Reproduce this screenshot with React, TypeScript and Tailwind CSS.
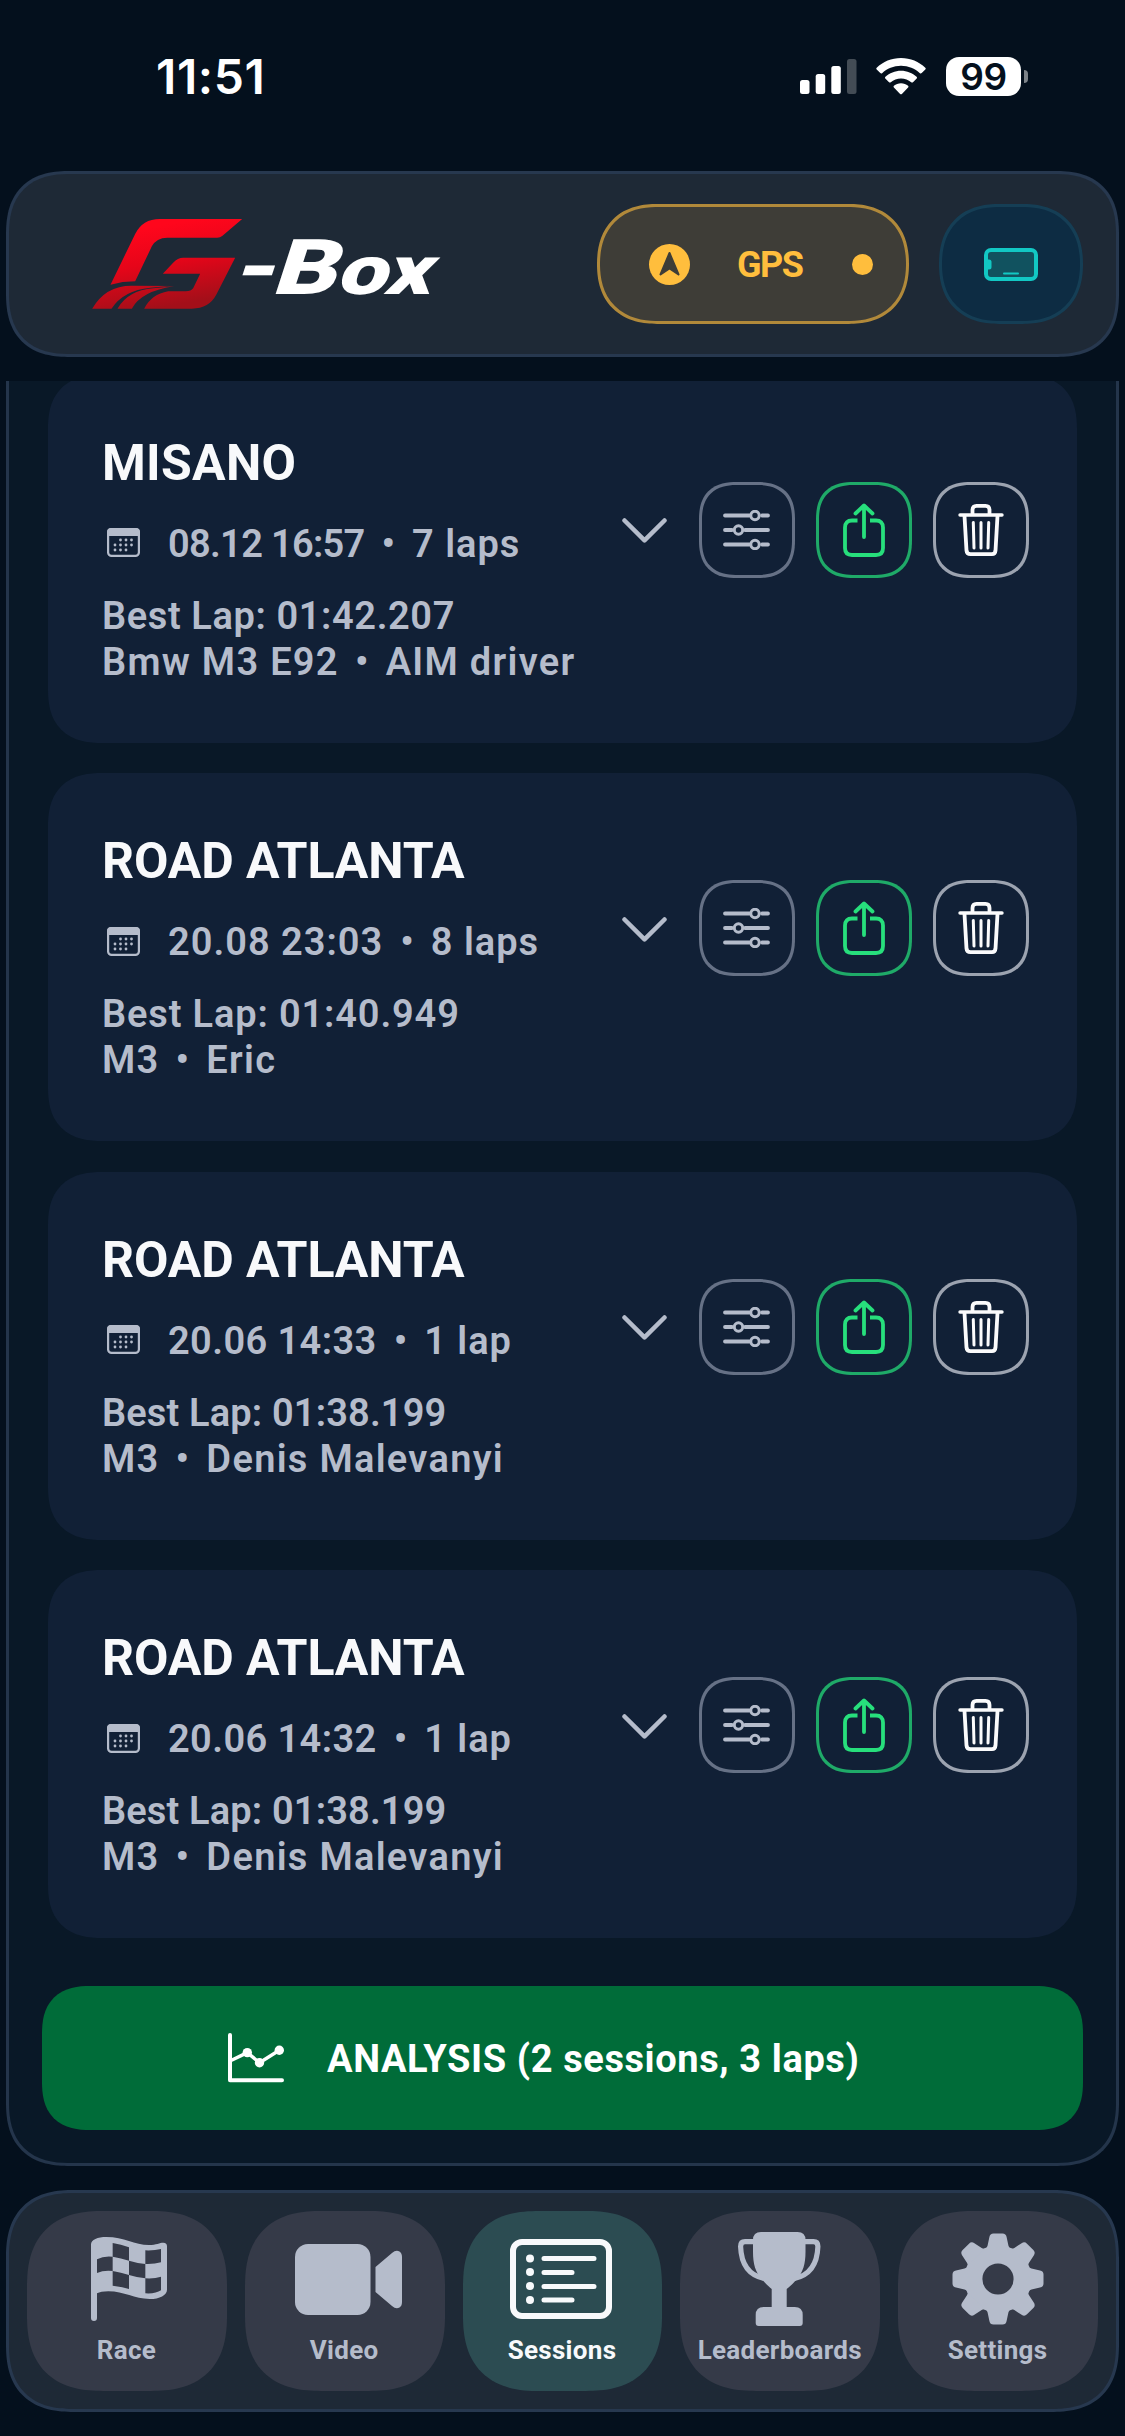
import { FC, ReactNode } from "react";
import clsx from "clsx";

interface Session {
  id: number;
  track: string;
  date: string;
  laps: string;
  bestLap: string;
  car: string;
  driver: string;
  dateClass: string;
  bestLapClass: string;
}

interface NavItem {
  label: string;
  icon: ReactNode;
  active?: boolean;
}

const sessions: Session[] = [
  { id: 1, track: "MISANO", date: "08.12 16:57", laps: "7 laps", bestLap: "01:42.207", car: "Bmw M3 E92", driver: "AIM driver", dateClass: "tracking-[-0.7px]", bestLapClass: "tracking-[0.6px]" },
  { id: 2, track: "ROAD ATLANTA", date: "20.08 23:03", laps: "8 laps", bestLap: "01:40.949", car: "M3", driver: "Eric", dateClass: "tracking-[1px]", bestLapClass: "tracking-[0.85px]" },
  { id: 3, track: "ROAD ATLANTA", date: "20.06 14:33", laps: "1 lap", bestLap: "01:38.199", car: "M3", driver: "Denis Malevanyi", dateClass: "tracking-[0.4px]", bestLapClass: "tracking-[0.15px]" },
  { id: 4, track: "ROAD ATLANTA", date: "20.06 14:32", laps: "1 lap", bestLap: "01:38.199", car: "M3", driver: "Denis Malevanyi", dateClass: "tracking-[0.4px]", bestLapClass: "tracking-[0.15px]" },
];

const FlagIcon = () => (
  <svg className="ml-[4px]" width="76" height="84" viewBox="0 0 228 252" fill="currentColor">
    <path
      fillRule="evenodd"
      d="M0 22C0 8 20 0 46 0C100 0 130 24 174 24C196 24 206 17 217 17Q228 17 228 28V158C228 174 206 186 176 186C130 186 100 163 52 163C36 163 26 165 18 169V243Q18 252 9 252Q0 252 0 243Z
      M65 18V59Q90 63 114 71V31Q90 22 65 18Z
      M163 40V81Q190 82 210 76V36Q190 41 163 40Z
      M18 67V108Q38 99 65 102V59Q38 56 18 67Z
      M114 71V114Q140 122 163 124V81Q140 79 114 71Z
      M65 102V146Q90 149 114 156V114Q90 106 65 102Z
      M163 124V169Q194 171 210 160V119Q190 126 163 124Z"
    />
  </svg>
);

const VideoIcon = () => (
  <svg className="ml-[7px]" width="107" height="71" viewBox="0 0 107 71" fill="currentColor">
    <rect width="75.5" height="71" rx="13" />
    <path d="M80.500 23L97 9Q101 5.500 104.500 7.500Q107 9 107 13V58Q107 62 104.500 63.500Q101 65.500 97 62L80.500 48Z" />
  </svg>
);

const SessionsIcon = () => (
  <svg className="-ml-[2px]" width="102" height="80" viewBox="0 0 102 80" fill="none" stroke="currentColor" strokeWidth="5" strokeLinecap="round">
    <rect x="3" y="3" width="96" height="74" rx="9" strokeWidth="6" />
    <path d="M34 19.500H84M34 33.500H62M34 47.500H84M34 61H62" />
    <g fill="currentColor" stroke="none">
      <circle cx="20" cy="19.500" r="4" />
      <circle cx="20" cy="33" r="4" />
      <circle cx="20" cy="47" r="4" />
      <circle cx="20" cy="61" r="4" />
    </g>
  </svg>
);

const TrophyIcon = () => (
  <svg className="-ml-[2px]" width="83" height="94" viewBox="0 0 83 94" fill="currentColor">
    <path d="M15 8Q15 0 23 0H59.500Q67.500 0 67.500 8V20C67.500 32 65 40 59 47Q54 53 48.700 57V75H33.700V57Q28.500 53 23.500 47C17.500 40 15 32 15 20Z" />
    <path d="M17 9.700H7Q2.600 9.700 2.600 14.500C3.200 32 10 43 26 46.500M65.500 9.700H75.500Q79.900 9.700 79.900 14.500C79.300 32 72.500 43 56.500 46.500" fill="none" stroke="currentColor" strokeWidth="5.200" />
    <path d="M17.700 83Q17.700 75 25.700 75H56.700Q64.700 75 64.700 83V91Q64.700 94 61.700 94H20.700Q17.700 94 17.700 91Z" />
  </svg>
);

const GearIcon = () => (
  <svg width="92" height="92" viewBox="-46 -46 92 92">
    <defs>
      <mask id="gear-hole">
        <rect x="-46" y="-46" width="92" height="92" fill="white" />
        <circle r="15.600" fill="black" />
      </mask>
    </defs>
    <g fill="currentColor" mask="url(#gear-hole)">
      <circle r="33.600" />
      {[0, 45, 90, 135, 180, 225, 270, 315].map((angle) => (
        <path
          key={angle}
          transform={`rotate(${angle})`}
          d="M-12.500 -30.500Q-10.800 -31.500 -10.400 -33.500L-8.600 -42Q-8 -45.500 -4.500 -45.500H4.500Q8 -45.500 8.600 -42L10.400 -33.500Q10.800 -31.500 12.500 -30.500Z"
        />
      ))}
    </g>
  </svg>
);

const navItems: NavItem[] = [
  { label: "Race", icon: <FlagIcon /> },
  { label: "Video", icon: <VideoIcon /> },
  { label: "Sessions", icon: <SessionsIcon />, active: true },
  { label: "Leaderboards", icon: <TrophyIcon /> },
  { label: "Settings", icon: <GearIcon /> },
];

const StatusBar = () => (
  <div className="h-[171px] shrink-0 flex items-start justify-between pl-[156px] pr-[97px] pt-[56px] text-white">
    <span className="font-[Inter] text-[48px] leading-[42px] font-semibold tracking-[0.6px]">11:51</span>
    <div className="flex items-center h-[40px]">
      <svg width="57" height="36" viewBox="0 0 57 36" fill="currentColor">
        <rect x="0" y="22" width="9.500" height="14" rx="2.500" />
        <rect x="15.700" y="16" width="9.500" height="20" rx="2.500" />
        <rect x="31.300" y="8" width="9.500" height="28" rx="2.500" />
        <rect x="47" y="1" width="9.500" height="35" rx="2.500" opacity="0.250" />
      </svg>
      <svg className="ml-[19px]" width="50" height="37" viewBox="0 0 50 37" fill="currentColor">
        <path d="M25 0C34.500 0 43 3.700 49.300 9.700Q50.200 10.600 49.300 11.500L45.700 15.100Q44.800 16 43.900 15.200C39 10.500 32.400 7.700 25 7.700S11 10.500 6.100 15.200Q5.200 16 4.300 15.100L0.700 11.500Q-0.200 10.600 0.700 9.700C7 3.700 15.500 0 25 0Z" />
        <path d="M25 12.700C31 12.700 36.500 15 40.600 18.800Q41.600 19.700 40.700 20.600L37 24.200Q36.100 25 35.200 24.200C32.500 21.900 28.900 20.400 25 20.400S17.500 21.900 14.800 24.200Q13.900 25 13 24.200L9.300 20.600Q8.400 19.700 9.400 18.800C13.500 15 19 12.700 25 12.700Z" />
        <path d="M25 25.200C27.700 25.200 30.200 26.200 32.100 27.800Q33 28.700 32.100 29.600L25.900 35.900Q25 36.700 24.100 35.900L17.900 29.600Q17 28.700 17.900 27.800C19.800 26.200 22.300 25.200 25 25.200Z" />
      </svg>
      <div className="ml-[20px] w-[75px] h-[39px] rounded-[13px] bg-white flex items-center justify-center font-[Inter] text-[37px] leading-none font-semibold tracking-[-0.5px] text-[#04101d]">
        99
      </div>
      <div className="ml-[3px] w-[4px] h-[13px] rounded-r-full bg-[#7d8389]" />
    </div>
  </div>
);

const Logo = () => (
  <div className="flex items-start pt-[45px]">
    <svg width="151" height="90" viewBox="97 88 452 270">
      <defs>
        <linearGradient id="logo-red" gradientUnits="userSpaceOnUse" x1="280" y1="110" x2="320" y2="350">
          <stop offset="0" stopColor="#ff061c" />
          <stop offset="0.450" stopColor="#e60519" />
          <stop offset="1" stopColor="#a30f19" />
        </linearGradient>
      </defs>
      <g fill="url(#logo-red)">
        <path d="M152 285L226 133Q248 88 300 88H547L488 138Q481 144 472 144H322Q290 144 276 170L226 275Q188 275 152 285Z" />
        <path d="M309 252L340 219Q354 204 370 204H526L470 314Q448 357 396 357H253Q275 314 325 305H378Q394 305 400 296L421 252Z" />
        <path d="M97 357Q137 288 215 288L343 289Q300 291 272 294Q190 302 155 357Z" />
        <path d="M173 357Q205 302 280 296L343 290Q245 304 216 357Z" />
      </g>
    </svg>
    <div className="mt-[4px] -ml-[6px] origin-left scale-x-[1.3] -skew-x-[14deg] font-[Roboto] font-black text-[77px] leading-[90px] text-white whitespace-nowrap">
      <span className="tracking-[-3px]">-</span>B<span className="text-[69px] tracking-[-1px]">ox</span>
    </div>
  </div>
);

const Header = () => (
  <header className="mx-[6px] h-[186px] shrink-0 flex justify-between rounded-[64px] [corner-shape:superellipse(1.3)] border-[3px] border-[#27384f] bg-[#1e2936] pl-[83px] pr-[33px]">
    <Logo />
    <div className="flex items-center gap-[30px]">
      <div className="w-[312px] h-[120px] rounded-[68px] [corner-shape:superellipse(1.2)] border-[3px] border-[#b1893a] bg-[#3e3d37] flex items-center pl-[49px] pr-[33px] text-[#ffbe3d]">
        <svg width="41" height="41" viewBox="0 0 41 41">
          <circle cx="20.500" cy="20.500" r="20.500" fill="currentColor" />
          <path d="M20.500 9L29.500 30.500L20.500 24.500L11.500 30.500Z" fill="#3e3d37" stroke="#3e3d37" strokeWidth="2" strokeLinejoin="round" />
        </svg>
        <span className="ml-[47px] mt-[2px] font-[Roboto] text-[36px] font-bold tracking-[-1.5px]">GPS</span>
        <span className="ml-auto size-[21px] rounded-full bg-[#ffbe3d]" />
      </div>
      <div className="w-[144px] h-[120px] rounded-[60px] [corner-shape:superellipse(1.2)] border-[3px] border-[#153e55] bg-[#0d2c43] flex items-center justify-center">
        <svg width="54" height="33" viewBox="0 0 54 33">
          <rect x="2" y="2" width="50" height="29" rx="5" fill="#11525f" stroke="#12c8c4" strokeWidth="4" />
          <path d="M2 11.500H5Q7.500 11.500 7.500 14V19Q7.500 21.500 5 21.500H2Z" fill="#12c8c4" />
          <path d="M20 25.500H34" stroke="#12c8c4" strokeWidth="2" strokeLinecap="round" />
        </svg>
      </div>
    </div>
  </header>
);

const CalendarIcon = () => (
  <svg width="33" height="29" viewBox="0 0 33 29" fill="currentColor">
    <rect x="1.100" y="1.100" width="30.800" height="26.800" rx="3.500" fill="none" stroke="currentColor" strokeWidth="2.200" />
    <path d="M0 8V4Q0 0 4 0H29Q33 0 33 4V8Z" />
    {[13.500, 19, 24.500].map((x) => <circle key={x} cx={x} cy="12" r="1.400" />)}
    {[8, 13.500, 19, 24.500].map((x) => <circle key={x} cx={x} cy="17" r="1.400" />)}
    {[8, 13.500, 19].map((x) => <circle key={x} cx={x} cy="22" r="1.400" />)}
  </svg>
);

const SlidersIcon = () => (
  <svg className="-ml-px" width="47" height="40" viewBox="0 0 47 40" fill="none" stroke="currentColor" strokeWidth="3.800" strokeLinecap="round">
    <path d="M2 5.500H26M39 5.500H45M2 20H9M22 20H45M2 34.500H26M39 34.500H45" />
    <g strokeWidth="3">
      <circle cx="32" cy="5.500" r="4.200" />
      <circle cx="15.500" cy="20" r="4.200" />
      <circle cx="32" cy="34.500" r="4.200" />
    </g>
  </svg>
);

const ShareIcon = () => (
  <svg className="-ml-px" width="42" height="54" viewBox="0 0 42 54" fill="none" stroke="currentColor" strokeWidth="3.800">
    <path d="M14.500 17.500H9Q2 17.500 2 24.500V45Q2 52 9 52H33Q40 52 40 45V24.500Q40 17.500 33 17.500H27" />
    <path d="M21 34V3M12.500 10.500L21 2.500L29.500 10.500" strokeLinecap="round" strokeLinejoin="round" />
  </svg>
);

const TrashIcon = () => (
  <svg className="-ml-px" width="46" height="54" viewBox="0 0 46 54" fill="none" stroke="currentColor" strokeWidth="3.800" strokeLinecap="round">
    <path d="M2 12H44" strokeWidth="3.400" />
    <path d="M14.500 11V7Q14.500 2.800 18.500 2.800H27.500Q31.500 2.800 31.500 7V11" />
    <path d="M6.500 13L8.500 47.500Q8.800 51.200 12.500 51.200H34Q37.200 51.200 37.500 47.500L39.500 13" />
    <path d="M15.300 19.500L16 45M23 19.500V45M30.700 19.500L30 45" strokeWidth="3" />
  </svg>
);

const ActionButton: FC<{ className: string; children: ReactNode }> = ({ className, children }) => (
  <button
    type="button"
    className={clsx(
      "size-[96px] rounded-[38px] [corner-shape:superellipse(1.3)] border-[3px] flex items-center justify-center",
      className
    )}
  >
    {children}
  </button>
);

const SessionCard: FC<{ session: Session }> = ({ session }) => (
  <div className="h-[368px] shrink-0 rounded-[54px] [corner-shape:superellipse(1.3)] bg-[#112036] flex justify-between items-start pl-[54px] pr-[48px] pt-[58px]">
    <div className="font-[Roboto] text-[38px] leading-[46px] font-semibold text-[#b5bccb] whitespace-nowrap">
      <h2
        className={clsx(
          "text-[50px] leading-[60px] font-bold text-[#f8f9fb]",
          session.track.length > 8 ? "tracking-[-0.1px]" : "tracking-[0.3px]"
        )}
      >
        {session.track}
      </h2>
      <div className="mt-[28px] flex items-center">
        <span className="-mt-[2px] ml-[5px] w-[61px]">
          <CalendarIcon />
        </span>
        <span className={session.dateClass}>{session.date}</span>
        <span className="mx-[17px]">•</span>
        <span className="tracking-[1px]">{session.laps}</span>
      </div>
      <p className={clsx("mt-[26px]", session.bestLapClass)}>Best Lap: {session.bestLap}</p>
      <p className="tracking-[1.3px]">
        {session.car}
        <span className="mx-[16px]">•</span>
        {session.driver}
      </p>
    </div>
    <div className="mt-[49px] flex items-center gap-[21px]">
      <svg className="mt-[2px] mr-[11px] text-[#b5bccb]" width="45" height="25" viewBox="0 0 45 25" fill="none" stroke="currentColor" strokeWidth="4.500" strokeLinecap="round" strokeLinejoin="round">
        <path d="M2.500 2.500L22.500 22.300L42.500 2.500" />
      </svg>
      <ActionButton className="border-[#667186] text-[#b5bccb]">
        <SlidersIcon />
      </ActionButton>
      <ActionButton className="border-[#1faa68] text-[#27df7c]">
        <ShareIcon />
      </ActionButton>
      <ActionButton className="border-[#9ca3b0] text-[#fbfbfc]">
        <TrashIcon />
      </ActionButton>
    </div>
  </div>
);

const AnalysisButton = () => (
  <button
    type="button"
    className="mt-[48px] mx-[33px] h-[144px] shrink-0 rounded-[48px] [corner-shape:superellipse(1.3)] bg-[#006c39] flex items-center pl-[186px] text-white"
  >
    <svg width="56" height="50" viewBox="0 0 56 50" fill="none" stroke="currentColor" strokeWidth="4" strokeLinecap="round" strokeLinejoin="round">
      <path d="M2 2V47.300H54" />
      <path d="M3 27.500L19.300 19.600L31.500 29.700L51.300 17.300" strokeWidth="3.400" />
      <g fill="currentColor" stroke="none">
        <circle cx="19.300" cy="19.600" r="4.700" />
        <circle cx="31.500" cy="29.700" r="4.700" />
        <circle cx="51.300" cy="17.300" r="4.700" />
      </g>
    </svg>
    <span className="ml-[43px] mt-[3px] font-[Roboto] text-[38px] font-bold tracking-[0.6px] whitespace-nowrap">ANALYSIS (2 sessions, 3 laps)</span>
  </button>
);

const BottomNav = () => (
  <nav className="mt-[24px] mx-[6px] h-[222px] shrink-0 rounded-[68px] [corner-shape:superellipse(1.3)] border-[3px] border-[#27384f] bg-[#1e2936] p-[18px] flex gap-[18px]">
    {navItems.map((item) => (
      <div
        key={item.label}
        className={clsx(
          "flex-1 min-w-0 rounded-[76px] [corner-shape:superellipse(1.3)] flex flex-col items-center",
          item.active ? "bg-[#2c4c52] text-[#f8f9fb]" : "bg-[#353a48] text-[#b5bccb]"
        )}
      >
        <div className="mt-[17px] h-[102px] flex items-center">{item.icon}</div>
        <span className="mt-[4px] -ml-[1px] font-[Roboto] text-[26px] leading-[32px] font-bold tracking-[0.3px]">{item.label}</span>
      </div>
    ))}
  </nav>
);

export default function App() {
  return (
    <div className="w-[1125px] h-[2436px] overflow-hidden bg-[#04101d] flex flex-col">
      <StatusBar />
      <Header />
      <main className="mt-[24px] mx-[6px] h-[1785px] shrink-0 overflow-hidden rounded-b-[64px] [corner-shape:superellipse(1.3)] border-x-[3px] border-b-[3px] border-[#24354b] bg-[#091827] flex flex-col">
        <div className="-mt-[6.5px] mx-[39px] shrink-0 flex flex-col gap-[30.5px]">
          {sessions.map((session) => (
            <SessionCard key={session.id} session={session} />
          ))}
        </div>
        <AnalysisButton />
      </main>
      <BottomNav />
    </div>
  );
}
